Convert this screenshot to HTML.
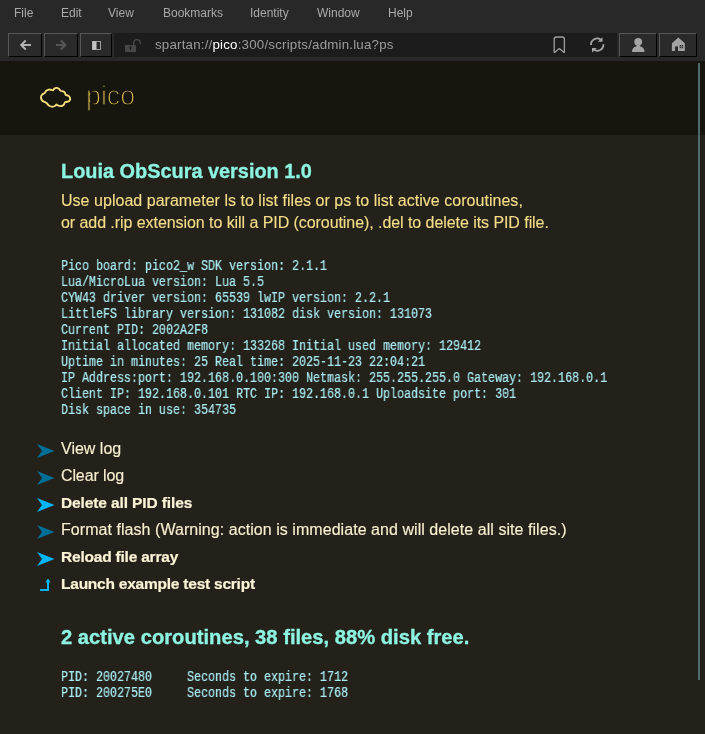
<!DOCTYPE html>
<html lang="en">
<head>
<meta charset="utf-8">
<title>pico</title>
<style>
*{box-sizing:border-box;margin:0;padding:0}
html,body{width:705px;height:734px;overflow:hidden;background:#24211a}
body{position:relative;font-family:"Liberation Sans",sans-serif;color:#f0e8c8}
.abs{position:absolute;white-space:nowrap}
#root{position:absolute;left:0;top:0;width:705px;height:734px;will-change:transform}
#chrome{position:absolute;left:0;top:0;width:705px;height:61px;background:#282828}
.menu{position:absolute;top:6px;font-size:12px;line-height:14px;color:#a9a9a9}
.btn{position:absolute;top:33px;height:24px;background:#2a2a2a;border:1px solid;border-color:#585858 #000 #000 #585858}
#url{position:absolute;left:114px;top:33px;width:503px;height:24px;background:#1c1c1c}
#urltext{position:absolute;left:155px;top:37px;font-size:13.3px;line-height:16px;letter-spacing:0.205px;color:#9c9c9c;white-space:nowrap}
#urltext b{font-weight:normal;color:#ffffff}
#banner{position:absolute;left:0;top:61px;width:705px;height:74px;background:#16150e}
#title{position:absolute;left:86px;top:79px;font-size:27.5px;line-height:34px;color:#e0c052;-webkit-text-stroke:1.3px #16150e;white-space:nowrap;transform-origin:0 0;transform:scaleX(0.975)}
h1,h2{position:absolute;left:61px;font-weight:bold;color:#8cf4e0;-webkit-text-stroke:0.3px #8cf4e0;white-space:nowrap}
h1{top:159px;font-size:19.9px;line-height:24px}
h2{top:625px;font-size:20.2px;line-height:24px}
.p{position:absolute;left:61px;font-size:16px;line-height:21px;color:#f4dd88;-webkit-text-stroke:0.15px #f4dd88;white-space:nowrap}
pre{position:absolute;left:61px;font-family:"Liberation Mono",monospace;font-size:14px;line-height:16px;color:#a8ecf2;-webkit-text-stroke:0.2px #a8ecf2;transform-origin:0 0;transform:scaleX(0.83333)}
.lnk{position:absolute;left:61px;font-size:16px;line-height:20px;color:#f7efd0;-webkit-text-stroke:0.15px #f7efd0;white-space:nowrap}
.lnk.b{font-weight:bold;font-size:15.5px;letter-spacing:-0.115px;color:#fbf3d6;-webkit-text-stroke:0.2px #fbf3d6}
#sb{position:absolute;left:698px;top:63px;width:2px;height:617px;background:#4f6a6c}
</style>
</head>
<body>
<div id="root">
<div id="chrome">
  <span class="menu" style="left:14px">File</span>
  <span class="menu" style="left:61px">Edit</span>
  <span class="menu" style="left:108px">View</span>
  <span class="menu" style="left:163px">Bookmarks</span>
  <span class="menu" style="left:250px">Identity</span>
  <span class="menu" style="left:317px">Window</span>
  <span class="menu" style="left:388px">Help</span>
  <div class="btn" style="left:8px;width:34px"></div>
  <div class="btn" style="left:44px;width:34px"></div>
  <div class="btn" style="left:80px;width:32px"></div>
  <div id="url"></div>
  <div id="urltext">spartan://<b>pico</b>:300/scripts/admin.lua?ps</div>
  <div class="btn" style="left:619px;width:38px"></div>
  <div class="btn" style="left:659px;width:38px"></div>
</div>
<div id="banner"></div>
<svg id="ic" class="abs" style="left:0;top:0" width="705" height="140" viewBox="0 0 705 140">
  <!-- back arrow -->
  <g fill="none" stroke="#b6b6b6" stroke-width="1.9" stroke-linecap="butt" stroke-linejoin="miter">
    <path d="M31 45H21.400"/><path d="M25.700 40.500L21.200 45l4.500 4.500"/>
  </g>
  <!-- forward arrow -->
  <g fill="none" stroke="#585858" stroke-width="1.900">
    <path d="M56 45H65.200"/><path d="M60.900 40.500L65.400 45l-4.500 4.500"/>
  </g>
  <!-- sidebar icon -->
  <rect x="92" y="41" width="4.5" height="9" fill="#c4c4c4"/>
  <rect x="92.5" y="41.5" width="8" height="8" fill="none" stroke="#b4b4b4" stroke-width="0.85"/>
  <!-- lock -->
  <rect x="125" y="45" width="11" height="7" fill="#474747"/>
  <path d="M130.5 47v3" stroke="#1c1c1c" stroke-width="1.2"/>
  <circle cx="130.5" cy="47.3" r="1" fill="#1c1c1c"/>
  <path d="M133.7 45.5v-2.6a3.3 3.3 0 0 1 6.6 0v1" fill="none" stroke="#474747" stroke-width="1.4"/>
  <!-- bookmark -->
  <path d="M554.200 52.800V39.200Q554.200 37 556.400 37H562.200Q564.400 37 564.400 39.200V52.800L559.300 48.600Z" fill="none" stroke="#9e9e9e" stroke-width="1.300" stroke-linejoin="bevel"/>
  <!-- reload -->
  <g fill="none" stroke="#a6a6a6" stroke-width="1.800">
    <path d="M591 45A6.200 6.200 0 0 1 600.800 39.600"/>
    <path d="M603.400 44.200A6.200 6.200 0 0 1 593.600 49.600"/>
  </g>
  <path d="M602.500 37.200V41.800H597.800z" fill="#a6a6a6"/>
  <path d="M592 52.400V48H596.800z" fill="#a6a6a6"/>
  <!-- person -->
  <circle cx="638.2" cy="41.8" r="3.9" fill="#a3a3a3"/>
  <path d="M632 52q0-4.300 3.700-5.400l1-0.600v-2h3v2l1 0.600q3.800 1.100 3.800 5.400z" fill="#a3a3a3"/>
  <!-- home -->
  <path d="M678.3 37.6l6.5 5.6V51h-6.8v-4.4h-3V51h-3.100v-7.800z" fill="#a3a3a3"/>
  <rect x="679.7" y="45" width="3.4" height="3.2" fill="#2a2a2a"/>
  <path d="M681.4 45v3.200M679.7 46.600h3.400" stroke="#8a8a8a" stroke-width="0.7"/>
  <!-- cloud -->
  <path d="M40.96 97.60C40.91 96.50 41.66 95.18 42.30 94.40C42.94 93.62 44.08 93.53 44.80 92.90C45.52 92.27 45.80 91.17 46.60 90.60C47.40 90.03 48.55 89.57 49.60 89.50C50.65 89.43 52.12 90.35 52.90 90.20C53.68 90.05 53.71 88.98 54.30 88.60C54.89 88.22 55.68 87.88 56.45 87.90C57.22 87.92 58.21 88.23 58.90 88.70C59.59 89.17 59.88 90.25 60.60 90.70C61.32 91.15 62.47 91.03 63.20 91.40C63.93 91.77 64.58 92.32 65.00 92.90C65.42 93.48 65.13 94.42 65.70 94.90C66.27 95.38 67.65 95.20 68.40 95.80C69.15 96.40 70.12 97.60 70.20 98.50C70.28 99.40 69.75 100.58 68.90 101.20C68.05 101.82 65.98 101.57 65.10 102.20C64.22 102.83 64.35 104.35 63.60 105.00C62.85 105.65 61.60 106.05 60.60 106.10C59.60 106.15 58.28 105.58 57.60 105.30C56.92 105.02 56.90 104.32 56.50 104.40C56.10 104.48 55.87 105.40 55.20 105.80C54.53 106.20 53.50 106.80 52.50 106.80C51.50 106.80 50.12 106.35 49.20 105.80C48.28 105.25 47.63 104.10 47.00 103.50C46.37 102.90 46.13 102.62 45.40 102.20C44.67 101.78 43.34 101.77 42.60 101.00C41.86 100.23 41.01 98.70 40.96 97.60Z" fill="none" stroke="#f5de7a" stroke-width="1.9" stroke-linejoin="round"/>
</svg>
<div id="title">pico</div>
<h1>Louia ObScura version 1.0</h1>
<div class="p" style="top:190px;letter-spacing:0.03px">Use upload parameter ls to list files or ps to list active coroutines,</div>
<div class="p" style="top:212px;letter-spacing:-0.063px">or add .rip extension to kill a PID (coroutine), .del to delete its PID file.</div>
<pre style="top:258px">Pico board: pico2_w SDK version: 2.1.1
Lua/MicroLua version: Lua 5.5
CYW43 driver version: 65539 lwIP version: 2.2.1
LittleFS library version: 131082 disk version: 131073
Current PID: 2002A2F8
Initial allocated memory: 133268 Initial used memory: 129412
Uptime in minutes: 25 Real time: 2025-11-23 22:04:21
IP Address:port: 192.168.0.100:300 Netmask: 255.255.255.0 Gateway: 192.168.0.1
Client IP: 192.168.0.101 RTC IP: 192.168.0.1 Uploadsite port: 301
Disk space in use: 354735</pre>
<div class="lnk" style="top:439px">View log</div>
<div class="lnk" style="top:466px;letter-spacing:-0.12px">Clear log</div>
<div class="lnk b" style="top:493px">Delete all PID files</div>
<div class="lnk" style="top:520px;letter-spacing:0.05px">Format flash (Warning: action is immediate and will delete all site files.)</div>
<div class="lnk b" style="top:547px;letter-spacing:-0.21px">Reload file array</div>
<div class="lnk b" style="top:574px;letter-spacing:-0.23px">Launch example test script</div>
<svg class="abs" style="left:30px;top:436px" width="40" height="170" viewBox="30 436 40 170">
  <path d="M37 444L54.500 451L37 458L42 451z" fill="#006f98"/>
  <path d="M37 471L54.500 478L37 485L42 478z" fill="#006f98"/>
  <path d="M37 498L54.500 505L37 512L42 505z" fill="#00b6f6"/>
  <path d="M37 525L54.500 532L37 539L42 532z" fill="#006f98"/>
  <path d="M37 552L54.500 559L37 566L42 559z" fill="#00b6f6"/>
  <path d="M40 590h8v-8.500" fill="none" stroke="#00b6f6" stroke-width="2"/>
  <path d="M48 578.400l2.600 3.800h-5.200z" fill="#00b6f6"/>
</svg>
<h2>2 active coroutines, 38 files, 88% disk free.</h2>
<pre style="top:669px">PID: 20027480     Seconds to expire: 1712
PID: 200275E0     Seconds to expire: 1768</pre>
<div id="sb"></div>
</div>
</body>
</html>
